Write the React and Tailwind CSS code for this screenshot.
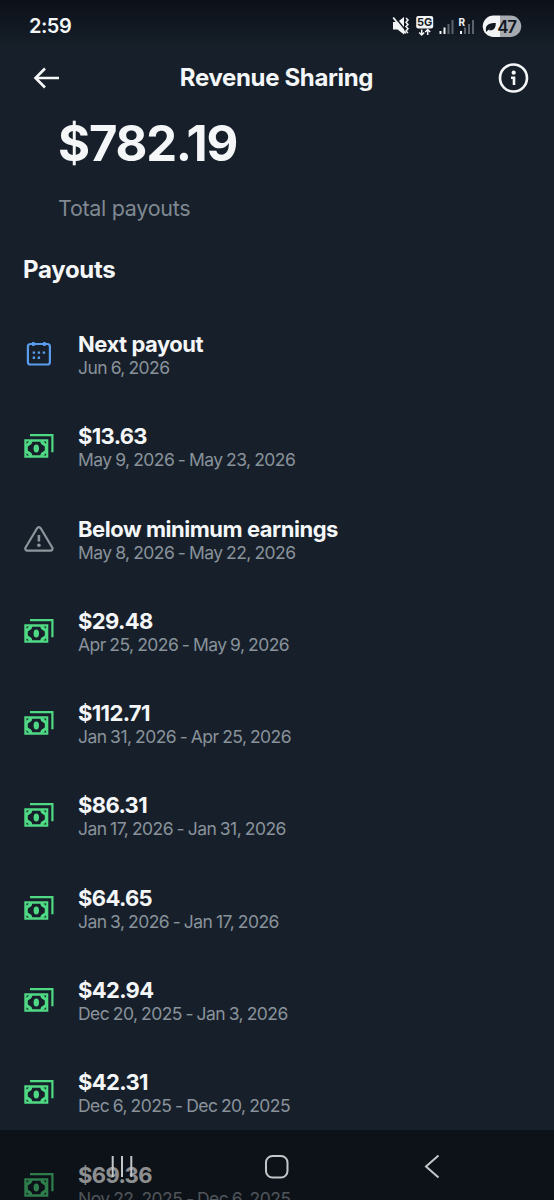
const payouts = [
  { icon: "calendar", title: "Next payout", date: "Jun 6, 2026" },
  { icon: "cash", title: "$13.63", date: "May 9, 2026 - May 23, 2026" },
  { icon: "warning", title: "Below minimum earnings", date: "May 8, 2026 - May 22, 2026" },
  { icon: "cash", title: "$29.48", date: "Apr 25, 2026 - May 9, 2026" },
  { icon: "cash", title: "$112.71", date: "Jan 31, 2026 - Apr 25, 2026" },
  { icon: "cash", title: "$86.31", date: "Jan 17, 2026 - Jan 31, 2026" },
  { icon: "cash", title: "$64.65", date: "Jan 3, 2026 - Jan 17, 2026" },
  { icon: "cash", title: "$42.94", date: "Dec 20, 2025 - Jan 3, 2026" },
  { icon: "cash", title: "$42.31", date: "Dec 6, 2025 - Dec 20, 2025" },
  { icon: "cash", title: "$69.36", date: "Nov 22, 2025 - Dec 6, 2025" },
]

function CashIcon() {
  return (
    <svg width="30" height="30" viewBox="0 0 30 30" className="text-[#50d984]">
      <path d="M6 3h23.500v18.300h-2.200V5.200H6z" fill="currentColor" />
      <path
        fillRule="evenodd"
        fill="currentColor"
        d="M.3 8.200h24v18.600H.3zM8.300 10.800L7.500 13l-3.700 2.500v4L7.500 22l.8 2.200h8l.8-2.200 3.700-2.500v-4L17.100 13l-.8-2.200zM2.500 10.500v2.300l2.500-2.300zM22.100 10.500v2.300l-2.500-2.300zM2.500 24.500v-2.300l2.500 2.300zM22.100 24.500v-2.300l-2.500 2.300z"
      />
      <ellipse cx="12.300" cy="17.500" rx="2.700" ry="4.100" fill="currentColor" />
    </svg>
  )
}

function CalendarIcon() {
  return (
    <svg width="30" height="30" viewBox="0 0 30 30" fill="none" className="text-[#5b9bee]">
      <rect x="3.900" y="5" width="22" height="20.500" rx="2.600" stroke="currentColor" strokeWidth="2.200" />
      <path d="M9.400 3v4M20.400 3v4" stroke="currentColor" strokeWidth="2.600" />
      <path
        d="M8.700 13.600h2.400M13.700 13.600h2.400M18.700 13.600h2.400M8.700 18.700h2.400M13.700 18.700h2.400"
        stroke="currentColor"
        strokeWidth="2.400"
      />
    </svg>
  )
}

function WarningIcon() {
  return (
    <svg width="30" height="30" viewBox="0 0 30 30" fill="none" className="text-[#8e959d]">
      <path
        d="M13.100 4.200a2.100 2.100 0 0 1 3.600 0l11.500 19.300a2.100 2.100 0 0 1-1.800 3.200H3.400a2.100 2.100 0 0 1-1.800-3.200z"
        stroke="currentColor"
        strokeWidth="2.200"
      />
      <path d="M14.900 11v6.500" stroke="currentColor" strokeWidth="2.600" />
      <circle cx="14.900" cy="21.300" r="1.800" fill="currentColor" />
    </svg>
  )
}

const icons = { cash: CashIcon, calendar: CalendarIcon, warning: WarningIcon }

function StatusBar() {
  return (
    <div className="h-[50px] shrink-0 pt-px pl-[29px] pr-8 flex items-center justify-between bg-linear-to-b from-[#0c1019] to-[#17202a]">
      <span className="text-[20px] font-semibold tracking-[-0.5px]">2:59</span>
      <svg width="130" height="24" viewBox="0 0 130 24" className="text-[#f2f4f6]">
        {/* muted speaker */}
        <path d="M1 8h4.500l6.500-5v17.500L5.500 15.500H1z" fill="currentColor" />
        <path d="M2.500 2.500l13 16" stroke="#141b25" strokeWidth="1.500" />
        <path d="M1.200 3.500l12.500 16" stroke="currentColor" strokeWidth="1.800" />
        <path d="M14 4l2 2-2 2.200 2 2.200-2 2.200 2 2.200-2 2.200 2 2" fill="none" stroke="currentColor" strokeWidth="1.500" />
        {/* 5G */}
        <rect x="24.200" y="2" width="17" height="12.500" rx="2" fill="currentColor" />
        <text x="32.700" y="12.200" textAnchor="middle" fontSize="11" fontWeight="700" fontFamily="Inter" fill="#141b25">5G</text>
        <path d="M29.700 15.500v5.500m-2.500-2.500l2.500 2.500 2.500-2.500M35.700 21v-5.500m-2.500 2.500l2.500-2.500 2.500 2.500" fill="none" stroke="currentColor" strokeWidth="1.500" />
        {/* signal bars */}
        <path d="M48.500 20v-3M52.500 20v-6.500" stroke="currentColor" strokeWidth="2" />
        <path d="M56.500 20v-10M60.500 20v-14" stroke="#5c636c" strokeWidth="2" />
        <text x="66.500" y="11.500" fontSize="10" fontWeight="700" fontFamily="Inter" fill="currentColor">R</text>
        <path d="M69 20v-3" stroke="currentColor" strokeWidth="2" />
        <path d="M73 20v-6.500M77 20v-10M81 20v-14" stroke="#5c636c" strokeWidth="2" />
        {/* battery */}
        <path d="M108 1.500h-6.500a10.750 10.750 0 0 0 0 21.500h6.500z" fill="currentColor" />
        <path d="M108 1.500h10.500a10.750 10.750 0 0 1 0 21.500H108z" fill="#a7abb0" />
        <path d="M94 16.500c-.8-5 2-7.500 9.800-7.500 0 6.300-2.800 8-7.300 7l3.500-3.500-6 5.500z" fill="#111821" />
        <text x="105.300" y="18.500" fontSize="17" fontWeight="600" fontFamily="Inter" letterSpacing="-1.400" fill="#111821">47</text>
      </svg>
    </div>
  )
}

function Header() {
  return (
    <header className="h-[56px] shrink-0 pl-[32px] pr-[24px] flex items-center justify-between">
      <svg width="28" height="24" viewBox="0 0 28 24" fill="none" stroke="#f4f6f8" strokeWidth="2.600">
        <path d="M27 12H4M13 2.500L3.500 12l9.500 9.500" />
      </svg>
      <h1 className="text-[24px] leading-8 font-bold tracking-[-0.35px] mr-[5px]">Revenue Sharing</h1>
      <svg width="32" height="32" viewBox="0 0 32 32" fill="none">
        <circle cx="15.500" cy="16" r="13.500" stroke="#f4f6f8" strokeWidth="2.600" />
        <circle cx="15.700" cy="10.700" r="2.100" fill="#f4f6f8" />
        <path d="M13 15.700h3v7.300" stroke="#f4f6f8" strokeWidth="2.600" />
      </svg>
    </header>
  )
}

function PayoutRow({ payout }) {
  const Icon = icons[payout.icon]
  const isAmount = payout.icon === "cash"
  return (
    <li className="h-[92.300px] shrink-0 flex items-center pl-6 gap-6">
      <div className="pb-[3px]">
        <Icon />
      </div>
      <div>
        <p className={`text-[22px] leading-[24px] font-bold ${isAmount ? "tracking-[-0.650px]" : "tracking-[-0.470px]"}`}>
          {payout.title}
        </p>
        <p className="text-[17.500px] leading-[23px] tracking-[-0.540px] [word-spacing:-0.800px] text-[#89929b]">{payout.date}</p>
      </div>
    </li>
  )
}

export default function App() {
  return (
    <div className="w-[554px] h-[1200px] overflow-hidden relative flex flex-col bg-[#17202a] text-[#f4f6f8] font-['Inter','Liberation_Sans',sans-serif] whitespace-nowrap">
      <StatusBar />
      <Header />

      <section className="shrink-0 pl-[58px] pt-[9px]">
        <p className="text-[49px] leading-[58px] font-bold tracking-[-1.200px]">$782.19</p>
        <p className="mt-[21px] text-[21.500px] leading-7 tracking-[-0.300px] text-[#7f8892]">Total payouts</p>
      </section>

      <h2 className="shrink-0 pl-[23px] mt-[32px] text-[24px] leading-8 font-bold tracking-[-0.300px]">Payouts</h2>
      <ul className="mt-[23.300px] flex shrink-0 flex-col">
        {payouts.map((payout) => (
          <PayoutRow key={payout.date} payout={payout} />
        ))}
      </ul>

      {/* System navigation, the list shows through */}
      <nav className="absolute inset-x-0 bottom-0 h-[70px] bg-black/42">
        <svg width="554" height="70" viewBox="0 0 554 70" fill="none" stroke="#c4c7ca" strokeWidth="2">
          <path d="M112.700 26v21M122 26v21M131.300 26v21" />
          <rect x="266" y="26" width="21.500" height="21.500" rx="6.500" />
          <path d="M438.500 25.500L426 36.500l12.500 11" />
        </svg>
      </nav>
    </div>
  )
}
